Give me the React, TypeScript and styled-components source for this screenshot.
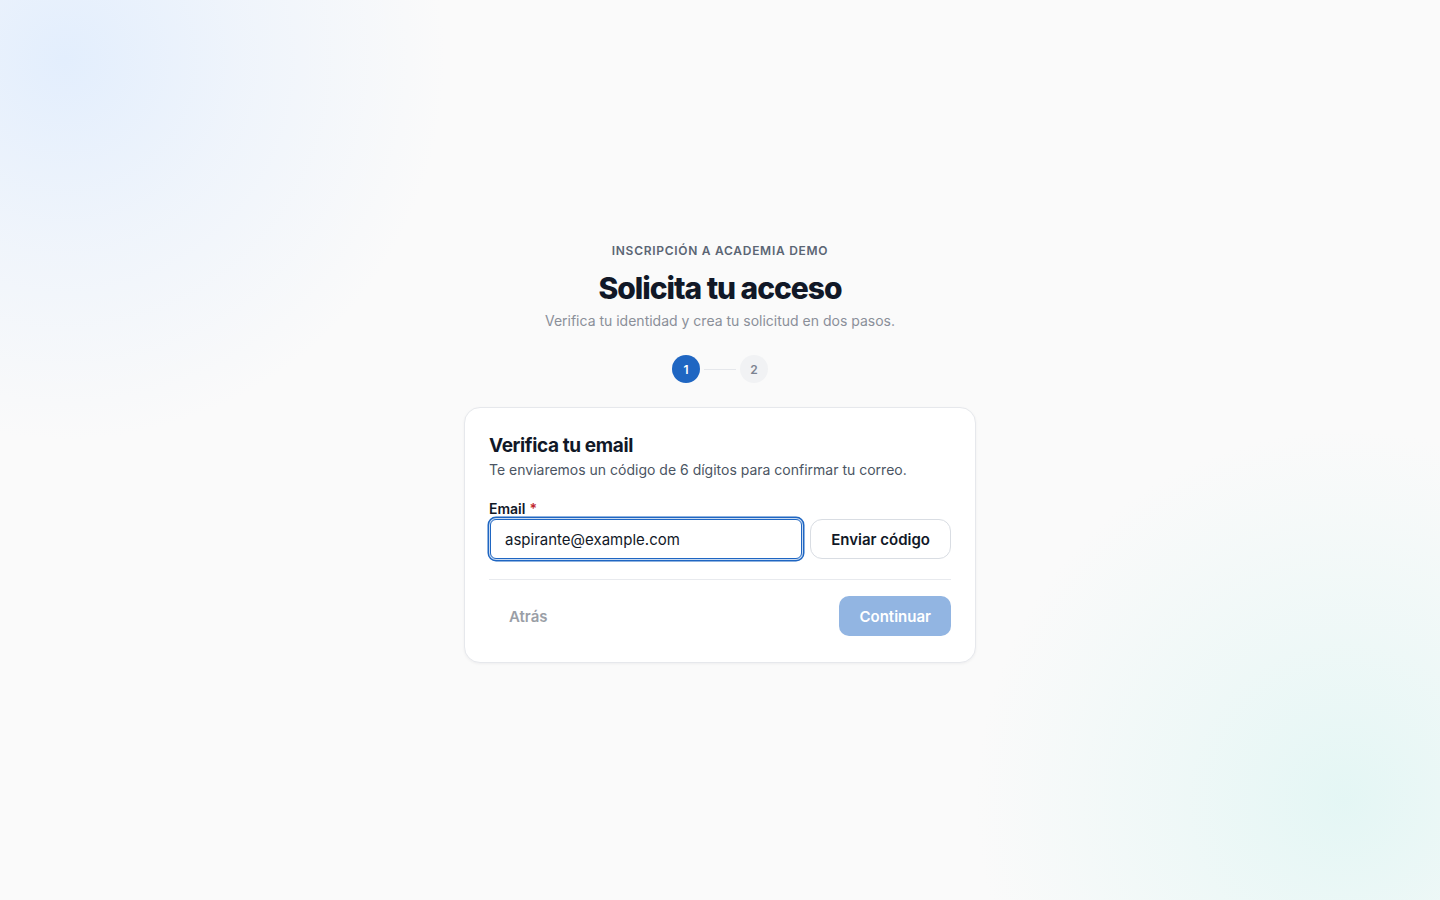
import styled, { createGlobalStyle } from "styled-components";

const GlobalStyle = createGlobalStyle`
  * {
    box-sizing: border-box;
  }
  html, body {
    margin: 0;
    padding: 0;
  }
  body {
    font-family: Inter, "Liberation Sans", sans-serif;
    color: #111827;
    background: #fafafa;
  }
`;

const Page = styled.main`
  min-height: 100vh;
  padding-top: 6px;
  display: flex;
  align-items: center;
  justify-content: center;
  background:
    radial-gradient(circle at 65px 60px, rgba(219, 234, 254, 0.75) 0, rgba(219, 234, 254, 0.35) 180px, rgba(250, 250, 250, 0) 380px),
    radial-gradient(circle at 1345px 800px, rgba(210, 243, 240, 0.55) 0, rgba(210, 243, 240, 0.28) 170px, rgba(250, 250, 250, 0) 370px),
    #fafafa;
`;

const Wrapper = styled.div`
  width: 512px;
  display: flex;
  flex-direction: column;
  align-items: center;
`;

const Eyebrow = styled.div`
  font-size: 12px;
  font-weight: 600;
  letter-spacing: 0.06em;
  text-transform: uppercase;
  color: #5b6574;
  line-height: 16px;
`;

const Title = styled.h1`
  margin: 11px 0 0;
  font-size: 30px;
  font-weight: 800;
  letter-spacing: -0.035em;
  line-height: 36px;
  color: #111827;
`;

const Subtitle = styled.p`
  margin: 5px 0 0;
  font-size: 14px;
  line-height: 20px;
  color: #8a8f99;
`;

const Stepper = styled.div`
  margin-top: 24px;
  display: flex;
  align-items: center;
  gap: 4px;
`;

const StepDot = styled.div<{ $active?: boolean }>`
  width: 28px;
  height: 28px;
  border-radius: 50%;
  display: flex;
  align-items: center;
  justify-content: center;
  font-size: 12px;
  font-weight: 600;
  background: ${({ $active }) => ($active ? "#1f66c2" : "#f1f2f4")};
  color: ${({ $active }) => ($active ? "#ffffff" : "#7c8390")};
`;

const StepLine = styled.div`
  width: 32px;
  height: 1px;
  background: #e5e7eb;
`;

const Card = styled.section`
  margin-top: 24px;
  width: 100%;
  background: #ffffff;
  border: 1px solid #e6e8ec;
  border-radius: 16px;
  box-shadow: 0 1px 3px rgba(15, 23, 42, 0.05);
  padding: 23px 24px 26px;
`;

const CardTitle = styled.h2`
  margin: 2px 0 0;
  font-size: 19px;
  font-weight: 700;
  letter-spacing: -0.02em;
  line-height: 26px;
  color: #111827;
`;

const CardText = styled.p`
  margin: 1px 0 0;
  font-size: 14px;
  line-height: 20px;
  color: #4b5563;
`;

const Field = styled.div`
  margin-top: 20px;
  display: flex;
  flex-direction: column;
  gap: 1px;
`;

const Label = styled.label`
  font-size: 14px;
  font-weight: 600;
  line-height: 18px;
  color: #111827;
`;

const Required = styled.span`
  color: #c0262d;
  margin-left: 4px;
`;

const Row = styled.div`
  display: flex;
  align-items: center;
  gap: 8px;
`;

const Input = styled.input`
  flex: 1;
  height: 40px;
  border: 1px solid #1f66c2;
  border-radius: 6px;
  box-shadow: 0 0 0 1px #c9dbf2, 0 0 0 2.5px #1f66c2;
  padding: 0 14px;
  font-family: inherit;
  font-size: 15px;
  color: #111827;
  background: #ffffff;
  outline: none;
  margin-left: 1px;
`;

const OutlineButton = styled.button`
  height: 40px;
  padding: 0 20px;
  border: 1px solid #d9dde3;
  border-radius: 12px;
  background: #ffffff;
  font-family: inherit;
  font-size: 15px;
  font-weight: 600;
  color: #111827;
  cursor: pointer;
`;

const Divider = styled.hr`
  margin: 20px 0 16px;
  border: 0;
  border-top: 1px solid #e8eaee;
`;

const Footer = styled.div`
  display: flex;
  align-items: center;
  justify-content: space-between;
`;

const GhostButton = styled.button`
  height: 40px;
  padding: 0 20px;
  border: 0;
  border-radius: 10px;
  background: transparent;
  font-family: inherit;
  font-size: 15px;
  font-weight: 600;
  color: #9a9ea6;
  cursor: pointer;
`;

const PrimaryButton = styled.button`
  height: 40px;
  padding: 0 20px;
  border: 0;
  border-radius: 10px;
  background: #92b5e2;
  font-family: inherit;
  font-size: 15px;
  font-weight: 600;
  color: #ffffff;
  cursor: not-allowed;
`;

export default function App() {
  return (
    <>
      <GlobalStyle />
      <Page>
        <Wrapper>
          <Eyebrow>Inscripción a Academia Demo</Eyebrow>
          <Title>Solicita tu acceso</Title>
          <Subtitle>Verifica tu identidad y crea tu solicitud en dos pasos.</Subtitle>
          <Stepper>
            <StepDot $active>1</StepDot>
            <StepLine />
            <StepDot>2</StepDot>
          </Stepper>
          <Card>
            <CardTitle>Verifica tu email</CardTitle>
            <CardText>Te enviaremos un código de 6 dígitos para confirmar tu correo.</CardText>
            <Field>
              <Label htmlFor="email">
                Email<Required>*</Required>
              </Label>
              <Row>
                <Input id="email" type="email" defaultValue="aspirante@example.com" />
                <OutlineButton type="button">Enviar código</OutlineButton>
              </Row>
            </Field>
            <Divider />
            <Footer>
              <GhostButton type="button">Atrás</GhostButton>
              <PrimaryButton type="button" disabled>
                Continuar
              </PrimaryButton>
            </Footer>
          </Card>
        </Wrapper>
      </Page>
    </>
  );
}
